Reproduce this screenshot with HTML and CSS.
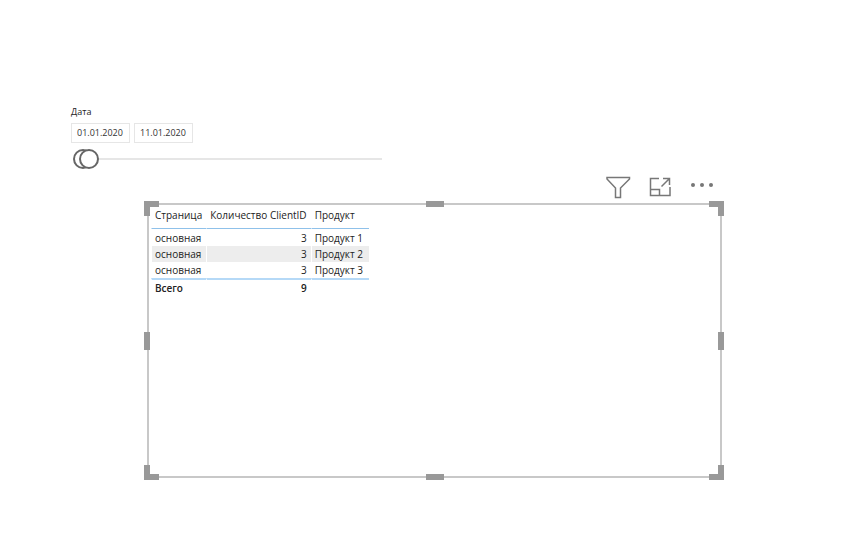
FILE: index.html
```html
<!DOCTYPE html>
<html lang="ru">
<head>
<meta charset="utf-8">
<meta name="viewport" content="width=device-width, initial-scale=1">
<title>Отчет</title>
<link rel="stylesheet" href="styles.css">
</head>
<body>
<main class="report">
  <section class="slicer">
    <h2 class="slicer-title">Дата</h2>
    <div class="dates">
      <input class="date" type="text" value="01.01.2020" aria-label="Дата начала">
      <input class="date" type="text" value="11.01.2020" aria-label="Дата окончания">
    </div>
    <div class="slider">
      <input class="range" type="range" min="0" max="100" value="0" aria-label="Начало периода">
      <input class="range" type="range" min="0" max="100" value="2" aria-label="Конец периода">
    </div>
  </section>
  <section class="visual">
    <div class="toolbar">
      <button class="tool" type="button" aria-label="Фильтры">
        <svg width="26" height="24" viewBox="0 0 26 24"><path d="M2 2.500H24.500V4L15.500 13V22.500H10.500V13L2 4Z"/></svg>
      </button>
      <button class="tool" type="button" aria-label="Режим фокусировки">
        <svg width="26" height="24" viewBox="0 0 26 24"><path d="M12 3.500H3.500V20.500H23V12M3.500 14.500H12.500V20.500M14.500 11.500L22.500 3.500M16 3.500H22.500V10"/></svg>
      </button>
      <button class="tool" type="button" aria-label="Другие параметры">
        <svg class="dots" width="26" height="24" viewBox="0 0 26 24"><circle cx="4" cy="10" r="2"/><circle cx="13" cy="10" r="2"/><circle cx="22" cy="10" r="2"/></svg>
      </button>
    </div>
    <div class="frame">
      <table class="data">
        <thead>
          <tr><th>Страница</th><th class="num">Количество ClientID</th><th>Продукт</th></tr>
        </thead>
        <tbody>
          <tr><td>основная</td><td class="num">3</td><td>Продукт 1</td></tr>
          <tr><td>основная</td><td class="num">3</td><td>Продукт 2</td></tr>
          <tr><td>основная</td><td class="num">3</td><td>Продукт 3</td></tr>
        </tbody>
        <tfoot>
          <tr><td>Всего</td><td class="num">9</td><td></td></tr>
        </tfoot>
      </table>
      <span class="handle corner top left"></span>
      <span class="handle corner top right"></span>
      <span class="handle corner bottom left"></span>
      <span class="handle corner bottom right"></span>
      <span class="handle wide top"></span>
      <span class="handle wide bottom"></span>
      <span class="handle tall left"></span>
      <span class="handle tall right"></span>
    </div>
  </section>
</main>
</body>
</html>
```
FILE: styles.css
```css
* {
  box-sizing: border-box;
}

body {
  margin: 0;
  background: #fff;
  color: #222;
  font-family: "Open Sans", "Noto Sans", sans-serif;
  font-size: 10px;
}

.report {
  padding: 104px 135px 76px 71px;
}

.slicer {
  max-width: 311px;
}

.slicer-title {
  margin: 0 0 3px;
  font-size: 9px;
  font-weight: 400;
  line-height: 16px;
}

.dates {
  display: flex;
  gap: 4px;
}

.date {
  width: 59px;
  height: 20px;
  padding: 0 5px 1px;
  border: 1px solid #e6e6e6;
  background: #fff;
  color: #333;
  font-family: inherit;
  font-size: 9px;
}

.slider {
  display: grid;
  align-items: center;
  margin-top: 5px;
  padding-left: 2px;
}

.slider::before {
  content: "";
  grid-area: 1 / 1;
  height: 2px;
  margin-left: 26px;
  background: #e6e6e6;
}

.range {
  grid-area: 1 / 1;
  width: 100%;
  height: 22px;
  margin: 0;
  appearance: none;
  background: transparent;
  pointer-events: none;
}

.range::-webkit-slider-thumb {
  appearance: none;
  width: 20px;
  height: 20px;
  border: 2px solid #666;
  border-radius: 50%;
  background: #fff;
  pointer-events: auto;
}

.visual {
  margin: 2px 0 0 76px;
}

.toolbar {
  display: flex;
  justify-content: flex-end;
  gap: 16px;
  padding-right: 7px;
}

.tool {
  display: flex;
  align-items: flex-start;
  height: 31px;
  padding: 3px 0 0;
  border: 0;
  background: none;
}

.tool svg {
  display: block;
  fill: none;
  stroke: #777;
  stroke-width: 1.5;
}

.tool .dots {
  fill: #777;
  stroke: none;
}

.frame {
  position: relative;
  min-height: 275px;
  padding: 2px;
  border: 2px solid #c8c8c8;
}

.data {
  border-collapse: separate;
  border-spacing: 0;
  line-height: 16px;
}

.data th,
.data td {
  height: 16px;
  padding: 0 4px 0 3px;
  border-left: 1px solid #fff;
  background-clip: padding-box;
  text-align: left;
  white-space: nowrap;
}

.data th {
  height: 22px;
  padding-bottom: 5px;
  border-bottom: 1px solid #8fc1ea;
  font-weight: 400;
}

.data th:last-child,
.data td:last-child {
  padding-right: 6px;
}

.data .num {
  text-align: right;
}

.data tbody tr:first-child td {
  padding-top: 1px;
}

.data tbody tr:nth-child(even) td {
  background-color: #ededed;
}

.data tfoot td {
  border-top: 2px solid #b5d9f7;
  font-weight: 600;
}

.handle {
  position: absolute;
  background: #999;
}

.corner {
  width: 15px;
  height: 15px;
}

.top { top: -4px; }
.bottom { bottom: -4px; }
.left { left: -5px; }
.right { right: -4px; }

.corner.top.left { clip-path: polygon(0 0, 100% 0, 100% 6px, 6px 6px, 6px 100%, 0 100%); }
.corner.top.right { clip-path: polygon(0 0, 100% 0, 100% 100%, 9px 100%, 9px 6px, 0 6px); }
.corner.bottom.left { clip-path: polygon(0 0, 6px 0, 6px 9px, 100% 9px, 100% 100%, 0 100%); }
.corner.bottom.right { clip-path: polygon(9px 0, 100% 0, 100% 100%, 0 100%, 0 9px, 9px 9px); }

.wide {
  left: calc(50% - 9px);
  width: 18px;
  height: 6px;
}

.tall {
  top: calc(50% - 9px);
  width: 6px;
  height: 18px;
}
```
